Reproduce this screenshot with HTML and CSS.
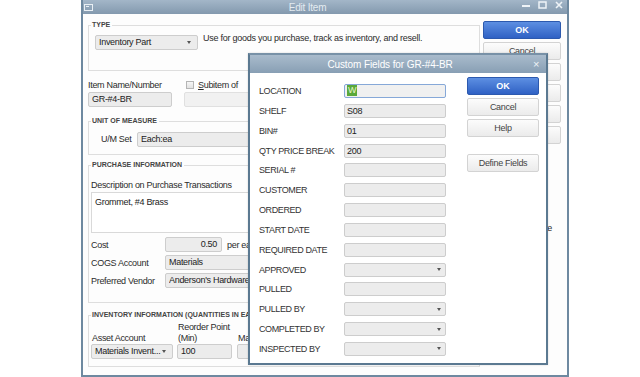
FILE: index.html
```html
<!DOCTYPE html>
<html>
<head>
<meta charset="utf-8">
<title>Edit Item</title>
<link rel="stylesheet" href="styles.css">
</head>
<body>
<div class="win main">
  <div class="titlebar">
    <svg class="sysicon" width="9" height="7" viewBox="0 0 9 7"><rect x="0.5" y="0.5" width="8" height="6" fill="none" stroke="#e9eff4"/><rect x="2" y="2" width="3" height="1" fill="#e9eff4"/></svg>
    <span class="wtitle">Edit Item</span>
    <div class="wctrls">
      <svg width="8" height="8" viewBox="0 0 8 8"><path d="M0 5h8" stroke="#eef3f7" stroke-width="2"/></svg>
      <svg width="9" height="8" viewBox="0 0 9 8"><rect x="1" y="1" width="7" height="6" fill="none" stroke="#eef3f7" stroke-width="1.5"/></svg>
      <svg width="8" height="8" viewBox="0 0 8 8"><path d="M1 1l6 6M7 1l-6 6" stroke="#eef3f7" stroke-width="1.6"/></svg>
    </div>
  </div>
  <div class="wbody">
    <div class="form">
      <fieldset class="grp grp-type">
        <legend>TYPE</legend>
        <div class="type-row">
          <div class="sel sel-type"><span>Inventory Part</span><i class="caret"></i></div>
          <span class="type-desc">Use for goods you purchase, track as inventory, and resell.</span>
        </div>
      </fieldset>

      <div class="name-row">
        <div class="name-col">
          <div class="lbl">Item Name/Number</div>
          <div class="inp inp-name">GR-#4-BR</div>
        </div>
        <div class="sub-col">
          <div class="lbl chk-lbl"><span class="chk"></span><span><u>S</u>ubitem of</span></div>
          <div class="inp inp-sub dis"></div>
        </div>
      </div>

      <fieldset class="grp grp-uom">
        <legend>UNIT OF MEASURE</legend>
        <div class="uom-row">
          <span class="uom-lbl">U/M Set</span>
          <div class="sel sel-uom"><span>Each:ea</span><i class="caret"></i></div>
        </div>
      </fieldset>

      <fieldset class="grp grp-pur">
        <legend>PURCHASE INFORMATION</legend>
        <div class="desc-lbl">Description on Purchase Transactions</div>
        <div class="txtarea">Grommet, #4 Brass</div>
        <div class="frow first"><span class="flbl">Cost</span><div class="inp inp-cost">0.50</div><span class="per">per ea</span></div>
        <div class="frow"><span class="flbl">COGS Account</span><div class="sel sel-wide"><span>Materials</span><i class="caret"></i></div></div>
        <div class="frow"><span class="flbl">Preferred Vendor</span><div class="sel sel-wide"><span>Anderson's Hardware</span><i class="caret"></i></div></div>
      </fieldset>

      <fieldset class="grp grp-inv">
        <legend>INVENTORY INFORMATION (QUANTITIES IN EA)</legend>
        <div class="inv-row">
          <div class="inv-col c-asset"><div class="lbl">Asset Account</div><div class="sel"><span>Materials Invent...</span><i class="caret"></i></div></div>
          <div class="inv-col c-min"><div class="lbl">Reorder Point<br>(Min)</div><div class="inp">100</div></div>
          <div class="inv-col c-max"><div class="lbl">Max</div><div class="inp"></div></div>
        </div>
      </fieldset>
    </div>

    <div class="mbtns">
      <div class="btn primary">OK</div>
      <div class="btn">Cancel</div>
      <div class="btn"></div>
      <div class="btn"></div>
      <div class="btn"></div>
      <div class="btn"></div>
      <div class="inactive">e</div>
    </div>
  </div>
</div>

<div class="win dialog">
  <div class="dtitle"><span class="dt">Custom Fields for GR-#4-BR</span><span class="dclose">&#215;</span></div>
  <div class="dbody">
    <div class="fields">
      <span class="dl">LOCATION</span><div class="inp focus"><span class="selx">W</span></div>
      <span class="dl">SHELF</span><div class="inp">S08</div>
      <span class="dl">BIN#</span><div class="inp">01</div>
      <span class="dl">QTY PRICE BREAK</span><div class="inp">200</div>
      <span class="dl">SERIAL #</span><div class="inp"></div>
      <span class="dl">CUSTOMER</span><div class="inp"></div>
      <span class="dl">ORDERED</span><div class="inp"></div>
      <span class="dl">START DATE</span><div class="inp"></div>
      <span class="dl">REQUIRED DATE</span><div class="inp"></div>
      <span class="dl">APPROVED</span><div class="sel"><span></span><i class="caret"></i></div>
      <span class="dl">PULLED</span><div class="inp"></div>
      <span class="dl">PULLED BY</span><div class="sel"><span></span><i class="caret"></i></div>
      <span class="dl">COMPLETED BY</span><div class="sel"><span></span><i class="caret"></i></div>
      <span class="dl">INSPECTED BY</span><div class="sel"><span></span><i class="caret"></i></div>
    </div>
    <div class="dbtns">
      <div class="btn primary">OK</div>
      <div class="btn">Cancel</div>
      <div class="btn">Help</div>
      <div class="btn define">Define Fields</div>
    </div>
  </div>
</div>
</body>
</html>
```
FILE: styles.css
```css
* { box-sizing: border-box; }
html, body { margin: 0; padding: 0; }
body {
  width: 640px;
  height: 377px;
  overflow: hidden;
  position: relative;
  background: #fff;
  font-family: "Liberation Sans", Arial, sans-serif;
  font-size: 9px;
  letter-spacing: -0.3px;
  color: #2b2b2b;
}

/* main window */
.main {
  margin-left: 81px;
  width: 488px;
  height: 377px;
  border: 2px solid #6e89a0;
  border-top: 0;
  background: #fdfdfd;
  display: flex;
  flex-direction: column;
}
.titlebar {
  height: 14px;
  flex: none;
  background: linear-gradient(#a3b6c8, #8399ae);
  display: flex;
  align-items: center;
  padding: 0 4px 0 1px;
  color: #e4ebf1;
}
.sysicon { flex: none; }
.wtitle {
  flex: 1;
  text-align: center;
  font-size: 10px;
  letter-spacing: -0.2px;
}
.wctrls {
  display: flex;
  align-items: flex-start;
  gap: 8px;
  align-self: flex-start;
  margin-top: 1px;
}
.wbody {
  flex: 1;
  display: flex;
  padding: 7px 6px 0 5px;
}
.form { width: 392px; flex: none; }

.grp {
  margin: 0;
  padding: 0 6px 0 2px;
  border: 1px solid #dedede;
  min-width: 0;
}
.grp legend {
  font-size: 7px;
  font-weight: bold;
  line-height: 8px;
  letter-spacing: 0;
  padding: 0 2px 0 1px;
  color: #444;
}

.sel, .inp {
  height: 15px;
  background: #ececec;
  border: 1px solid #cdcdcd;
  border-radius: 2px;
  color: #222;
  line-height: 13px;
  white-space: nowrap;
  overflow: hidden;
}
.sel {
  display: flex;
  align-items: center;
  padding: 0 6px 0 3px;
}
.sel span { flex: 1; overflow: hidden; }
.caret {
  flex: none;
  width: 0;
  height: 0;
  border-left: 2.5px solid transparent;
  border-right: 2.5px solid transparent;
  border-top: 3px solid #555;
}
.inp { padding: 0 3px; }
.inp.dis { background: #f1f1f1; border-color: #e0e0e0; }

.type-row {
  display: flex;
  align-items: flex-start;
  margin: 6px 0 20px 4px;
}
.sel-type { width: 103px; flex: none; padding-left: 3px; }
.type-desc {
  margin-left: 5px;
  line-height: 10px;
  margin-top: -2px;
  letter-spacing: -0.25px;
}

.name-row {
  display: flex;
  margin-top: 9px;
}
.lbl { line-height: 11px; }
.name-col { width: 84px; }
.name-col .inp, .sub-col .inp { margin-top: 1px; }
.sub-col { margin-left: 12px; width: 140px; }
.chk-lbl { display: flex; align-items: center; padding-left: 2px; }
.chk {
  width: 8px;
  height: 8px;
  border: 1px solid #b5b5b5;
  background: linear-gradient(#f6f6f6, #e2e2e2);
  margin: -2px 4px 0 0;
}

.grp-uom { margin-top: 10px; }
.uom-row {
  display: flex;
  align-items: center;
  margin: 7px 0 7px 10px;
}
.uom-lbl { width: 36px; line-height: 15px; }
.sel-uom { width: 200px; }

.grp-pur { margin-top: 6px; }
.desc-lbl { margin-top: 11px; line-height: 10px; }
.txtarea {
  margin-top: 2px;
  height: 41px;
  width: 380px;
  background: #fff;
  border: 1px solid #d9d9d9;
  padding: 4px 3px;
  line-height: 11px;
  color: #222;
}
.frow {
  display: flex;
  align-items: center;
  margin-top: 3px;
  height: 15px;
}
.frow.first { margin-top: 4px; }
.grp-pur .frow:last-child { margin-bottom: 14px; }
.flbl { width: 74px; flex: none; }
.inp-cost { width: 57px; text-align: right; padding-right: 4px; }
.per { margin-left: 5px; }
.sel-wide { width: 220px; }

.grp-inv { margin-top: 8px; }
.inv-row {
  display: flex;
  align-items: flex-end;
  margin: 3px 0 7px 0;
}
.inv-col { display: flex; flex-direction: column; }
.c-asset { width: 82px; }
.c-asset .sel { padding-left: 3px; }
.c-min { width: 55px; margin-left: 4px; }
.c-max { width: 55px; margin-left: 5px; }
.c-asset .lbl, .c-min .lbl, .c-max .lbl { padding-left: 1px; }

/* buttons */
.mbtns {
  width: 78px;
  margin-left: 3px;
  display: flex;
  flex-direction: column;
  gap: 3px;
}
.btn {
  height: 18px;
  border: 1px solid #d3d3d3;
  border-radius: 2px;
  background: linear-gradient(#fcfcfc, #ebebeb);
  color: #444;
  text-align: center;
  line-height: 16px;
  font-size: 9px;
  white-space: nowrap;
}
.btn.primary {
  background: linear-gradient(#5d8fe2, #2f61c4);
  border-color: #2c59ae;
  color: #fff;
  font-weight: bold;
  letter-spacing: 0;
}
.inactive {
  margin-top: 76px;
  line-height: 11px;
  text-align: right;
  padding-right: 9px;
}

/* custom fields dialog (floating window over the main one) */
.dialog {
  position: absolute;
  left: 248px;
  top: 53px;
  width: 300px;
  height: 312px;
  border: 2px solid #5b7991;
  border-top-color: #7891a7;
  background: #fff;
  display: flex;
  flex-direction: column;
  box-shadow: 0 0 2px rgba(0, 0, 0, 0.15);
}
.dtitle {
  height: 18px;
  flex: none;
  background: linear-gradient(#a9bbcc, #889fb4);
  color: #fff;
  display: flex;
  align-items: center;
}
.dt {
  flex: 1;
  text-align: center;
  font-size: 10px;
  letter-spacing: -0.1px;
}
.dclose {
  width: 12px;
  margin-right: 4px;
  text-align: center;
  font-size: 11px;
  line-height: 11px;
  color: #eef3f7;
}
.dbody {
  flex: 1;
  display: flex;
  padding: 0 7px 0 9px;
}
.fields {
  display: grid;
  grid-template-columns: 85px 102px;
  grid-auto-rows: 14px;
  row-gap: 5.85px;
  padding-top: 11px;
  align-items: center;
}
.dl {
  line-height: 14px;
  letter-spacing: -0.4px;
  color: #333;
}
.fields .inp, .fields .sel { height: 14px; line-height: 12px; }
.fields .inp { padding: 0 2px; }
.fields .sel { padding-right: 4px; }
.inp.focus { border-color: #86a8d8; background: #f0f0f0; }
.selx {
  display: inline-block;
  height: 11px;
  line-height: 11px;
  padding: 0 1px;
  background: #5aa83a;
  color: #e9f7c9;
  vertical-align: top;
}
.dbtns {
  width: 72px;
  margin-left: 21px;
  padding-top: 4px;
  display: flex;
  flex-direction: column;
  gap: 3px;
}
.btn.define { margin-top: 14px; }
```
